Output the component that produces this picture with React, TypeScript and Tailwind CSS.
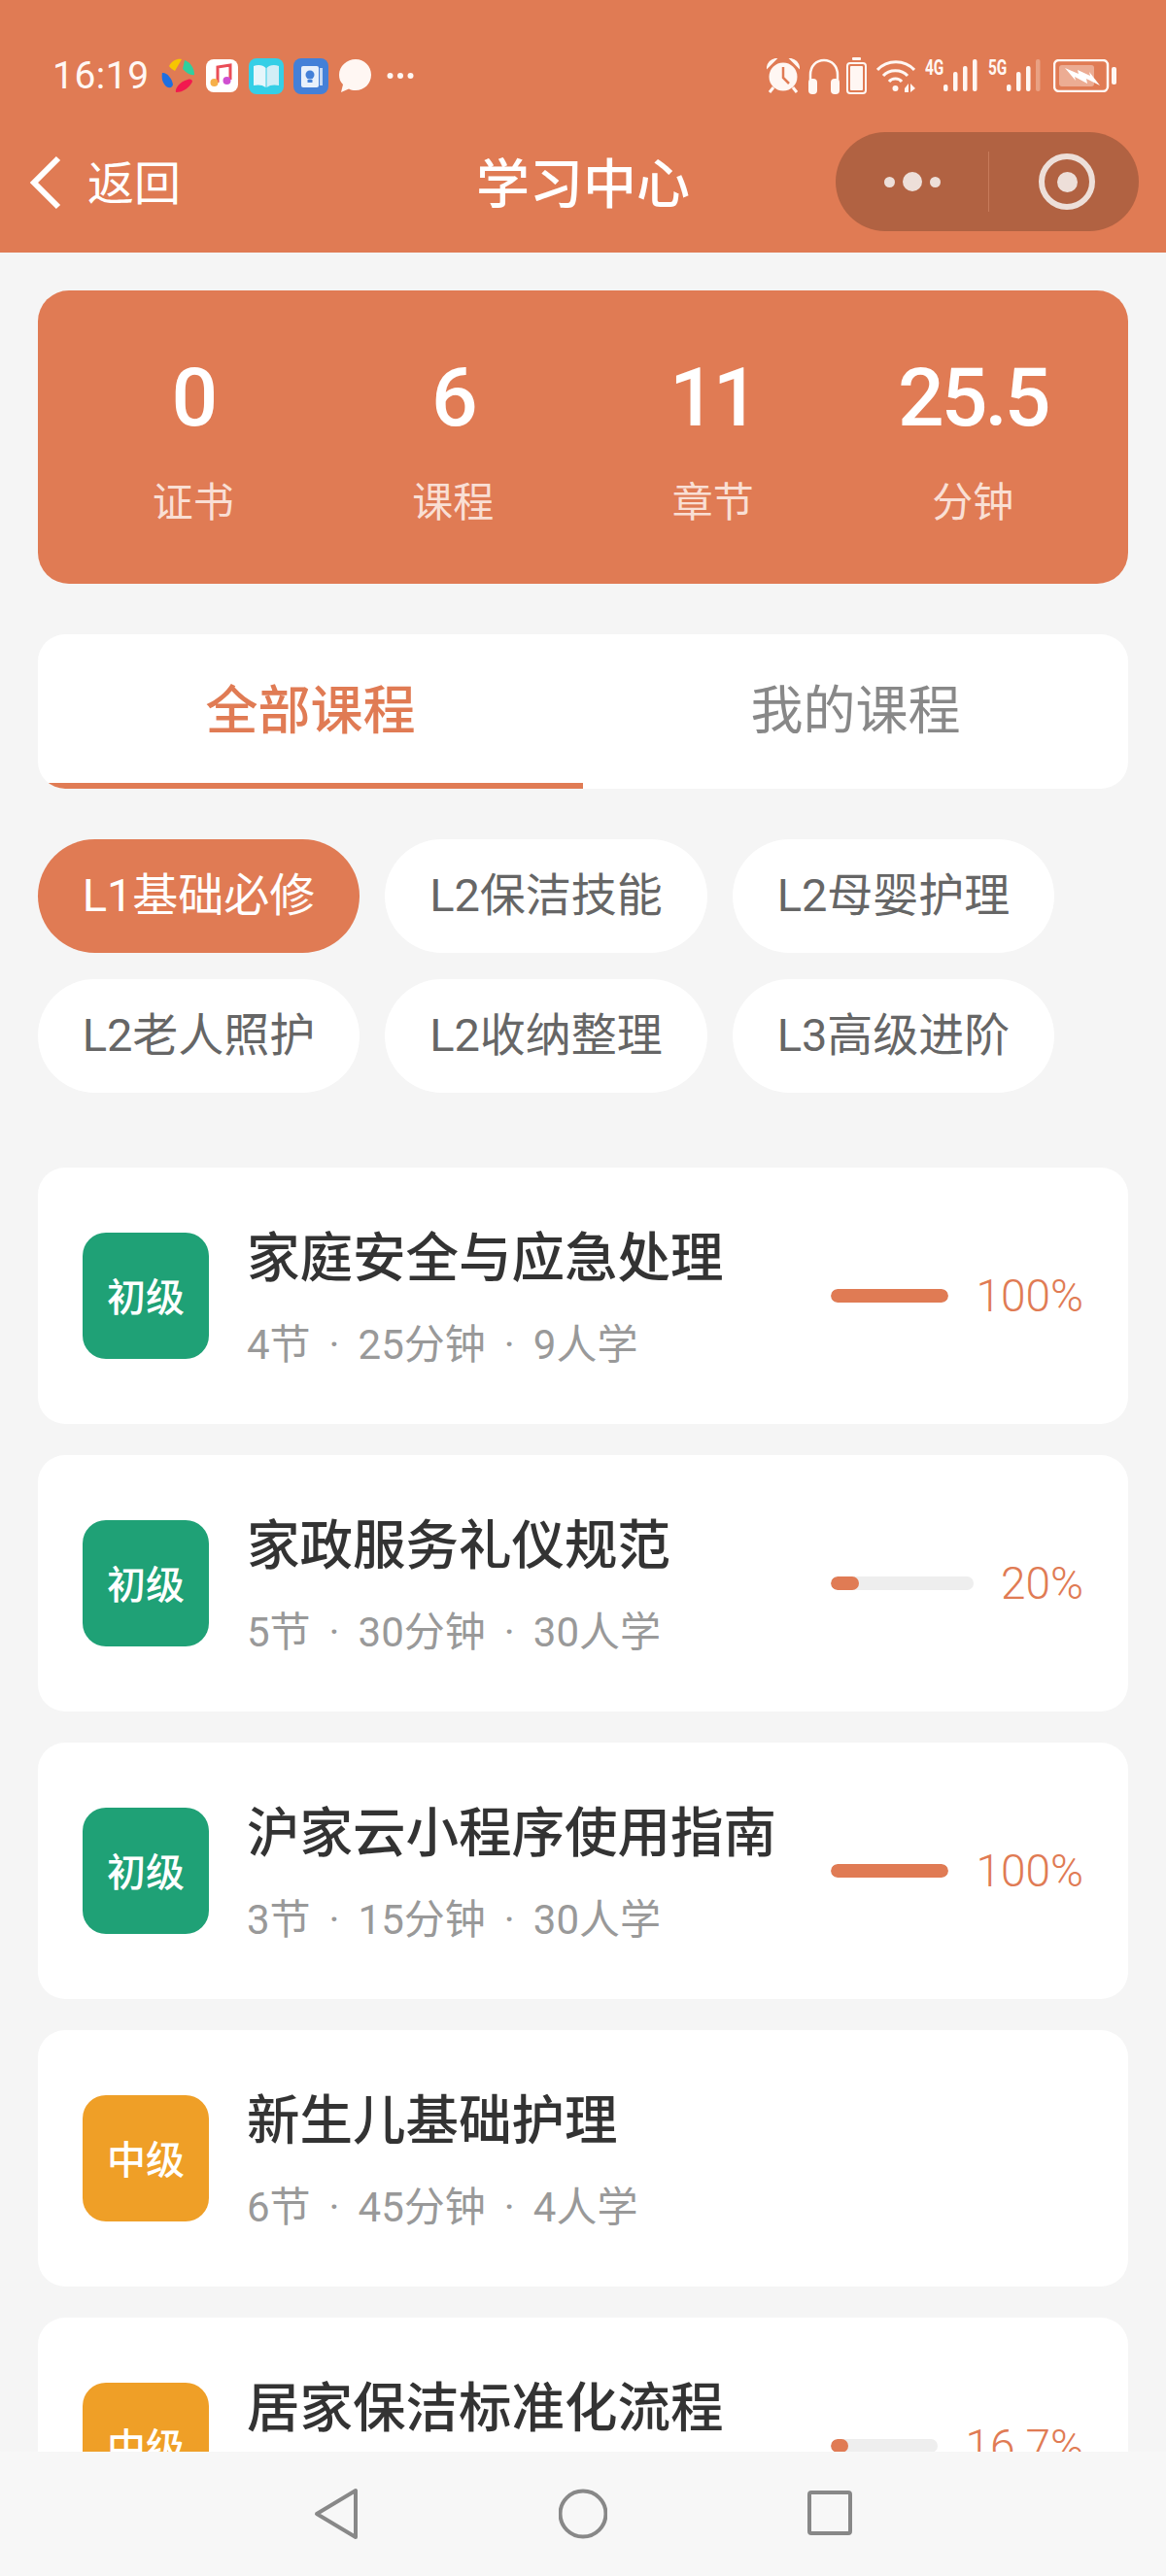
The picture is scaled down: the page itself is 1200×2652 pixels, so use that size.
import React from 'react';

const font = { fontFamily: '"Roboto", "Noto Sans CJK SC", sans-serif' };

interface Course {
  level: string;
  title: string;
  meta: string[];
  progress?: number;
  label?: string;
}

const courses: Course[] = [
  { level: '初级', title: '家庭安全与应急处理', meta: ['4节', '25分钟', '9人学'], progress: 100, label: '100%' },
  { level: '初级', title: '家政服务礼仪规范', meta: ['5节', '30分钟', '30人学'], progress: 20, label: '20%' },
  { level: '初级', title: '沪家云小程序使用指南', meta: ['3节', '15分钟', '30人学'], progress: 100, label: '100%' },
  { level: '中级', title: '新生儿基础护理', meta: ['6节', '45分钟', '4人学'] },
  { level: '中级', title: '居家保洁标准化流程', meta: ['4节', '30分钟', '6人学'], progress: 16.7, label: '16.7%' },
];

const stats = [
  { value: '0', label: '证书' },
  { value: '6', label: '课程' },
  { value: '11', label: '章节' },
  { value: '25.5', label: '分钟' },
];

const categories = ['L1基础必修', 'L2保洁技能', 'L2母婴护理', 'L2老人照护', 'L2收纳整理', 'L3高级进阶'];

const AppIcons = () => (
  <div className="flex items-center ml-[12px]">
    <svg width="35" height="36" viewBox="0 0 35 36">
      <path d="M8 8 C11 2 17 0 21 1 L14 13 C11 11 9 10 8 8Z" fill="#f7c600" />
      <path d="M24 2 C30 4 34 10 34 17 C30 18 26 15 22 11Z" fill="#2fcf9e" />
      <path d="M1 15 C5 14 11 20 12 27 C11 31 8 31 5 29 C1 25 0 20 1 15Z" fill="#1e6fe0" />
      <path d="M32 24 C29 30 23 35 15 35 C14 31 19 24 27 22 C30 21 32 22 32 24Z" fill="#f2194f" />
    </svg>
    <svg className="ml-[11px]" width="33" height="34" viewBox="0 0 33 34">
      <rect width="33" height="34" rx="8" fill="#fff" />
      <path d="M12 24 V8 L25 6 V21" fill="none" stroke="#ea4d57" strokeWidth="3" />
      <circle cx="8.5" cy="24" r="4" fill="#f6b04a" />
      <circle cx="21.5" cy="22" r="4" fill="#cf4fd0" />
    </svg>
    <svg className="ml-[11px]" width="36" height="37" viewBox="0 0 36 37">
      <rect width="36" height="37" rx="8" fill="#35cfe6" />
      <path d="M5 8 C10 6 15 7 17.5 10 V30 C14 27 9 27 5 28Z" fill="#e6f6fb" />
      <path d="M31 8 C26 6 21 7 18.5 10 V30 C22 27 27 27 31 28Z" fill="#d2eef6" />
    </svg>
    <svg className="ml-[10px]" width="36" height="37" viewBox="0 0 36 37">
      <rect width="36" height="37" rx="8" fill="#4480d8" />
      <rect x="8" y="8" width="18" height="22" rx="2" fill="#e8f0fb" />
      <rect x="27" y="10" width="3" height="18" fill="#c5d8f3" />
      <circle cx="17" cy="17" r="4.5" fill="#4480d8" />
      <rect x="14.5" y="22" width="5" height="3" fill="#4480d8" />
    </svg>
    <svg className="ml-[10px]" width="35" height="36" viewBox="0 0 35 36">
      <path d="M18 1 C27 1 34 8 34 17 C34 26 27 33 18 33 C15 33 13 32.5 11 31.5 L3 35 L5 27 C2 24 1 21 1 17 C1 8 9 1 18 1Z" fill="#fff7f3" />
    </svg>
    <svg className="ml-[15px]" width="28" height="8" viewBox="0 0 28 8">
      <circle cx="3.5" cy="4" r="3" fill="#fff7f3" />
      <circle cx="14" cy="4" r="3" fill="#fff7f3" />
      <circle cx="24.5" cy="4" r="3" fill="#fff7f3" />
    </svg>
  </div>
);

const Bars = ({ dim }: { dim?: boolean }) => (
  <svg width="36" height="34" viewBox="0 0 36 34">
    <rect x="0" y="26" width="4.5" height="7" rx="2" fill="#fff7f3" />
    <rect x="10" y="13" width="4.5" height="20" rx="2" fill="#fff7f3" />
    <rect x="20" y="7" width="4.5" height="26" rx="2" fill="#fff7f3" />
    <rect x="30" y="0" width="4.5" height="33" rx="2" fill="#fff7f3" opacity={dim ? 0.3 : 1} />
  </svg>
);

const SystemIcons = () => (
  <div className="flex items-center mr-[50px]">
    <svg width="34" height="36" viewBox="0 0 34 36">
      <circle cx="17" cy="19" r="14.5" fill="#fff7f3" />
      <path d="M17 9 V20 L23 26" fill="none" stroke="#e07b54" strokeWidth="2.5" />
      <path d="M1 9 C2 4 5 2 9 1 Z M33 9 C32 4 29 2 25 1 Z" fill="#fff7f3" stroke="#fff7f3" strokeWidth="2" />
      <path d="M7 30 L3 35 M27 30 L31 35" stroke="#fff7f3" strokeWidth="3" />
    </svg>
    <svg className="ml-[8px]" width="34" height="37" viewBox="0 0 34 37">
      <path d="M3 24 V17 C3 8 9 2 17 2 C25 2 31 8 31 17 V24" fill="none" stroke="#fff7f3" strokeWidth="2.5" />
      <rect x="1" y="21" width="9" height="16" rx="4" fill="#fff7f3" />
      <rect x="24" y="21" width="9" height="16" rx="4" fill="#fff7f3" />
    </svg>
    <svg className="ml-[6px]" width="21" height="38" viewBox="0 0 21 38">
      <rect x="6" y="0" width="9" height="3" rx="1" fill="#fff7f3" />
      <rect x="1" y="6" width="19" height="31" rx="3" fill="none" stroke="#fff7f3" strokeWidth="2" />
      <rect x="4" y="9" width="13" height="25" rx="1" fill="#fff7f3" />
    </svg>
    <svg className="ml-[10px]" width="40" height="35" viewBox="0 0 40 35">
      <path d="M1 11 C11 0 29 0 39 11" fill="none" stroke="#fff7f3" strokeWidth="3" />
      <path d="M7 17 C13 10 26 10 32 17" fill="none" stroke="#fff7f3" strokeWidth="3" />
      <path d="M13 23 C16 19 23 19 26 23" fill="none" stroke="#fff7f3" strokeWidth="3" />
      <circle cx="19.5" cy="30" r="3" fill="#fff7f3" />
      <path d="M29 30 L33 25 V34 H29Z M35 25 V34 L40 30Z" fill="#fff7f3" />
    </svg>
    <div className="ml-[10px] flex items-start">
      <span className="text-[22px] leading-[17px] font-bold text-[#fff7f3] w-[19px] scale-x-70 origin-left whitespace-nowrap">4G</span>
      <Bars />
    </div>
    <div className="ml-[10px] flex items-start">
      <span className="text-[22px] leading-[17px] font-bold text-[#fff7f3] w-[19px] scale-x-70 origin-left whitespace-nowrap">5G</span>
      <Bars dim />
    </div>
    <svg className="ml-[12px]" width="66" height="34" viewBox="0 0 66 34">
      <rect x="1" y="1" width="55" height="32" rx="5" fill="none" stroke="#fff7f3" strokeWidth="2.5" />
      <rect x="6" y="6" width="36" height="22" rx="3" fill="#fff7f3" opacity="0.4" />
      <rect x="60" y="8" width="5" height="18" rx="2" fill="#fff7f3" />
      <path d="M12 9 L26 15 L25 11 L38 17 L37 13 L48 27 L34 20 L35 25 L22 18 L23 22Z" fill="#fff" />
    </svg>
  </div>
);

const Capsule = () => (
  <div className="flex items-center w-[312px] h-[102px] rounded-full bg-[#b16242]">
    <div className="flex items-center justify-center w-[157px] gap-[8px]">
      <span className="w-[11px] h-[11px] rounded-full bg-[#eddfd9]" />
      <span className="w-[20px] h-[20px] rounded-full bg-[#eddfd9]" />
      <span className="w-[11px] h-[11px] rounded-full bg-[#eddfd9]" />
    </div>
    <div className="w-px h-[62px] bg-[#c77a5a]" />
    <div className="flex items-center justify-center flex-1 pl-[6px]">
      <div className="flex items-center justify-center w-[58px] h-[58px] rounded-full border-[6px] border-[#eddfd9]">
        <span className="w-[21px] h-[21px] rounded-full bg-[#eddfd9]" />
      </div>
    </div>
  </div>
);

const Header = () => (
  <div className="h-[260px] bg-[#e07b54] text-white">
    <div className="flex items-center justify-between h-[40px] pt-[58px] box-content">
      <div className="flex items-center pl-[54px]">
        <span className="text-[39px] leading-[40px] text-[#fff7f3] tracking-[0.5px]">16:19</span>
        <AppIcons />
      </div>
      <SystemIcons />
    </div>
    <div className="grid grid-cols-[1fr_auto_1fr] items-center mt-[38px]">
      <div className="flex items-center pl-[30px]">
        <svg className="mt-[2px]" width="34" height="56" viewBox="0 0 34 56">
          <path d="M30 3 L5 28 L30 53" fill="none" stroke="#fff" strokeWidth="6" />
        </svg>
        <span className="ml-[26px] pt-[6px] text-[48px] leading-none">返回</span>
      </div>
      <span className="pt-[6px] text-[55px] leading-none font-medium">学习中心</span>
      <div className="flex justify-end pr-[28px]">
        <Capsule />
      </div>
    </div>
  </div>
);

const StatsCard = () => (
  <div className="grid grid-cols-4 h-[302px] mx-[39px] mt-[39px] px-[26px] pt-[69px] rounded-[32px] bg-[#e07b54] text-white">
    {stats.map(s => (
      <div key={s.label} className="flex flex-col items-center">
        <span className="text-[84px] leading-[84px] font-medium tracking-[-3px]">{s.value}</span>
        <span className="mt-[42px] text-[42px] leading-[48px] text-[#f9dfd4]">{s.label}</span>
      </div>
    ))}
  </div>
);

const Tabs = () => (
  <div className="flex h-[159px] mx-[39px] mt-[52px] rounded-[28px] bg-white overflow-hidden">
    <div className="flex items-center justify-center flex-1 pt-[6px] border-b-[6px] border-[#e07b54] text-[54px] font-medium text-[#e07b54]">全部课程</div>
    <div className="flex items-center justify-center flex-1 text-[54px] text-[#888888]">我的课程</div>
  </div>
);

const Categories = () => (
  <div className="grid grid-cols-[331px_332px_331px] gap-x-[26px] gap-y-[27px] mx-[39px] mt-[52px]">
    {categories.map((c, i) => (
      <div
        key={c}
        className={i === 0
          ? 'flex items-center justify-center h-[117px] rounded-full bg-[#e07b54] text-[47px] text-white'
          : 'flex items-center justify-center h-[117px] rounded-full bg-white text-[47px] text-[#666666]'}
      >
        {c}
      </div>
    ))}
  </div>
);

const CourseCard = ({ course }: { course: Course }) => (
  <div className="flex items-center h-[264px] pl-[46px] pr-[46px] rounded-[28px] bg-white">
    <div
      className={course.level === '初级'
        ? 'flex items-center justify-center shrink-0 w-[130px] h-[130px] pt-[5px] rounded-[24px] bg-[#1fa176] text-[40px] font-medium text-white'
        : 'flex items-center justify-center shrink-0 w-[130px] h-[130px] pt-[5px] rounded-[24px] bg-[#ef9f27] text-[40px] font-medium text-white'}
    >
      {course.level}
    </div>
    <div className="flex-1 ml-[39px] pt-[4px]">
      <div className="text-[54.5px] leading-[64px] font-medium text-[#333333]">{course.title}</div>
      <div className="mt-[33px] flex text-[42px] leading-[50px] text-[#999999]">
        {course.meta.map((m, i) => (
          <span key={m}>
            {i > 0 && <span className="mx-[19px]">·</span>}
            {m}
          </span>
        ))}
      </div>
    </div>
    {course.progress !== undefined && (
      <div className="flex items-center gap-[28px] w-[260px] shrink-0">
        <div className="flex-1 h-[14px] rounded-full bg-[#eeeeee] overflow-hidden">
          <div className="h-full rounded-full bg-[#e07b54]" style={{ width: `${course.progress}%` }} />
        </div>
        <span className="text-[46px] leading-none font-light text-[#e07b54]">{course.label}</span>
      </div>
    )}
  </div>
);

const NavBar = () => (
  <div className="absolute left-0 right-0 bottom-0 flex items-center justify-center gap-[206px] h-[128px] bg-[#f7f7f7]">
    <svg width="46" height="54" viewBox="0 0 46 54">
      <path d="M43 3 V51 L3 27Z" fill="none" stroke="#888888" strokeWidth="4" strokeLinejoin="round" />
    </svg>
    <svg width="50" height="54" viewBox="0 0 50 54">
      <circle cx="25" cy="27" r="23.5" fill="none" stroke="#888888" strokeWidth="4" />
    </svg>
    <svg width="46" height="54" viewBox="0 0 46 54">
      <rect x="2" y="5" width="42" height="42" rx="2" fill="none" stroke="#888888" strokeWidth="4" />
    </svg>
  </div>
);

export default function App() {
  return (
    <div className="relative w-[1200px] h-[2652px] overflow-hidden bg-[#f5f5f5]" style={font}>
      <Header />
      <StatsCard />
      <Tabs />
      <Categories />
      <div className="flex flex-col gap-[32px] mx-[39px] mt-[77px]">
        {courses.map(c => <CourseCard key={c.title} course={c} />)}
      </div>
      <NavBar />
    </div>
  );
}
